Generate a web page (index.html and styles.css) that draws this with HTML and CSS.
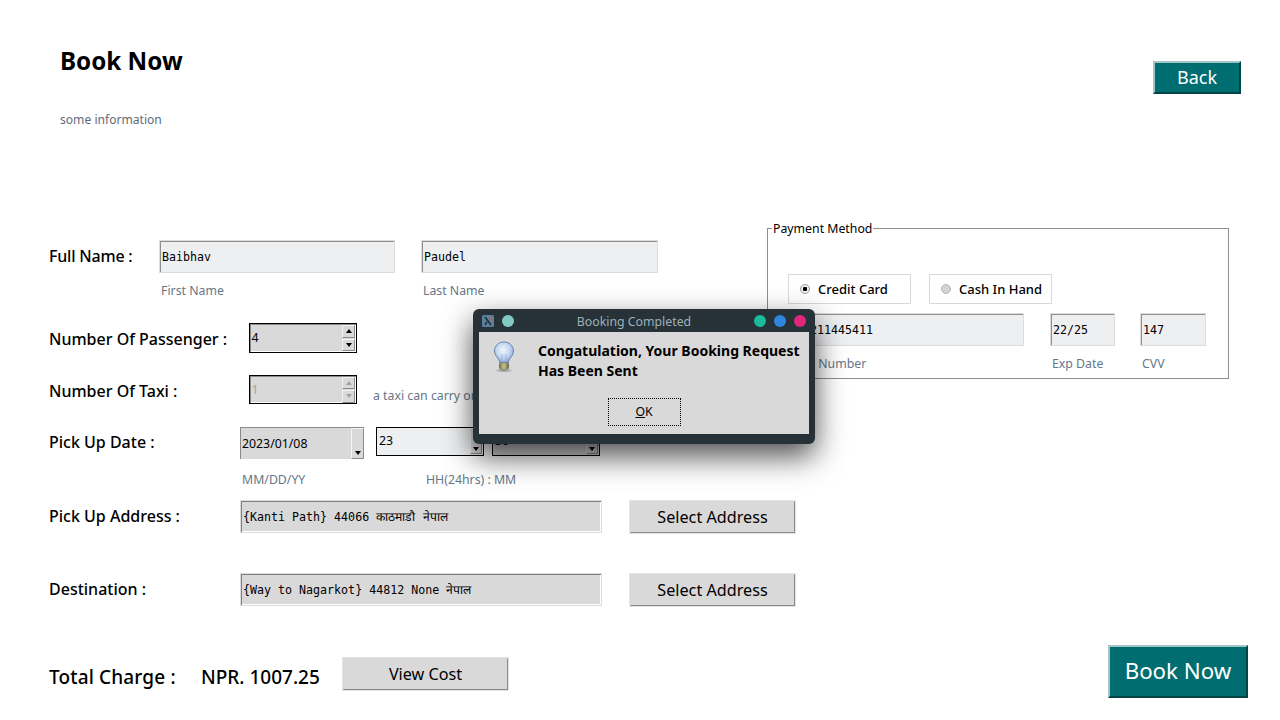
FILE: index.html
```html
<!DOCTYPE html>
<html lang="en">
<head>
<meta charset="utf-8">
<title>Book Now</title>
<link rel="stylesheet" href="styles.css">
</head>
<body>
<div class="page">
  <header class="top">
    <div>
      <h1 class="title">Book Now</h1>
      <p class="info">some information</p>
    </div>
    <button class="btn-teal btn-back">Back</button>
  </header>

  <section class="upper">
    <div class="left">
      <div class="row row-name">
        <label class="lbl lbl-name">Full Name :</label>
        <div class="entry entry-light mono entry-first">Baibhav</div>
        <div class="entry entry-light mono entry-last">Paudel</div>
      </div>
      <div class="subs subs-name">
        <span class="sub sub-first">First Name</span>
        <span class="sub">Last Name</span>
      </div>
      <div class="row row-pass">
        <label class="lbl lbl-pass">Number Of Passenger :</label>
        <div class="spin">
          <span class="spin-val">4</span>
          <span class="spin-btns">
            <span class="spin-btn"><i class="tri tri-up"></i></span>
            <span class="spin-btn"><i class="tri tri-down"></i></span>
          </span>
        </div>
      </div>
      <div class="row row-taxi">
        <label class="lbl lbl-pass">Number Of Taxi :</label>
        <div class="spin spin-off">
          <span class="spin-val">1</span>
          <span class="spin-btns">
            <span class="spin-btn"><i class="tri tri-up"></i></span>
            <span class="spin-btn"><i class="tri tri-down"></i></span>
          </span>
        </div>
        <span class="sub hint">a taxi can carry only 4 passengers</span>
      </div>
      <div class="row row-date">
        <label class="lbl lbl-date">Pick Up Date :</label>
        <div class="date">
          <span class="date-val">2023/01/08</span>
          <span class="date-arrow"><i class="tri tri-down"></i></span>
        </div>
        <div class="combo combo-hour">
          <span class="combo-val">23</span>
          <span class="combo-arrow"><i class="tri tri-down"></i></span>
        </div>
        <div class="combo combo-min">
          <span class="combo-val">30</span>
          <span class="combo-arrow"><i class="tri tri-down"></i></span>
        </div>
      </div>
      <div class="subs subs-date">
        <span class="sub sub-mm">MM/DD/YY</span>
        <span class="sub">HH(24hrs) : MM</span>
      </div>
    </div>

    <fieldset class="pay">
      <legend class="pay-legend">Payment Method</legend>
      <div class="radios">
        <div class="radio"><i class="dot dot-on"></i>Credit Card</div>
        <div class="radio"><i class="dot"></i>Cash In Hand</div>
      </div>
      <div class="card-row">
        <div class="card-col col-num">
          <div class="entry entry-light mono">123211445411</div>
          <span class="sub">Card Number</span>
        </div>
        <div class="card-col col-exp">
          <div class="entry entry-light mono">22/25</div>
          <span class="sub">Exp Date</span>
        </div>
        <div class="card-col col-cvv">
          <div class="entry entry-light mono">147</div>
          <span class="sub">CVV</span>
        </div>
      </div>
    </fieldset>
  </section>

  <section class="lower">
    <div class="row row-addr">
      <label class="lbl lbl-date">Pick Up Address :</label>
      <div class="entry entry-addr mono">{Kanti Path} 44066 <span class="deva">काठमाडौ नेपाल</span></div>
      <button class="btn-grey btn-select">Select Address</button>
    </div>
    <div class="row row-dest">
      <label class="lbl lbl-date">Destination :</label>
      <div class="entry entry-addr mono">{Way to Nagarkot} 44812 None <span class="deva">नेपाल</span></div>
      <button class="btn-grey btn-select">Select Address</button>
    </div>
    <div class="row row-total">
      <span class="total-lbl">Total Charge :</span>
      <span class="total-val">NPR. 1007.25</span>
      <button class="btn-grey btn-cost">View Cost</button>
      <button class="btn-teal btn-book">Book Now</button>
    </div>
  </section>
</div>

<div class="dialog" role="dialog">
  <div class="dlg-bar">
    <svg class="dlg-app" viewBox="0 0 12 12" width="12" height="12" aria-hidden="true">
      <rect width="12" height="12" rx="1.5" fill="#5b7f9e"/>
      <path d="M3 2 L9 10 M3 10 L5 7" stroke="#20303c" stroke-width="1.6" fill="none"/>
      <path d="M8 2 L10 9" stroke="#b9674a" stroke-width="1" fill="none"/>
    </svg>
    <i class="light light-pin"></i>
    <span class="dlg-title">Booking Completed</span>
    <i class="light light-min"></i>
    <i class="light light-max"></i>
    <i class="light light-close"></i>
  </div>
  <div class="dlg-body">
    <div class="dlg-main">
      <svg class="bulb" viewBox="0 0 22 32" width="22" height="32" aria-hidden="true">
        <defs>
          <radialGradient id="glass" cx="45%" cy="38%" r="65%">
            <stop offset="0" stop-color="#f2f6fc"/>
            <stop offset="0.55" stop-color="#c3d6f2"/>
            <stop offset="1" stop-color="#7fa0d4"/>
          </radialGradient>
          <radialGradient id="shade" cx="50%" cy="50%" r="50%">
            <stop offset="0" stop-color="#555" stop-opacity="0.6"/>
            <stop offset="1" stop-color="#555" stop-opacity="0"/>
          </radialGradient>
          <linearGradient id="base" x1="0" x2="1" y1="0" y2="0">
            <stop offset="0" stop-color="#8d8a55"/>
            <stop offset="0.5" stop-color="#f0eeb8"/>
            <stop offset="1" stop-color="#77744a"/>
          </linearGradient>
        </defs>
        <ellipse cx="11" cy="29.5" rx="10" ry="2.2" fill="url(#shade)"/>
        <path d="M11 1 C5.5 1 1.5 5 1.5 10 C1.5 14 4.5 16 6 19 L7 22 L15 22 L16 19 C17.5 16 20.5 14 20.5 10 C20.5 5 16.5 1 11 1 Z" fill="url(#glass)" stroke="#6d86ad" stroke-width="1"/>
        <path d="M8 21 L9.5 13 M14 21 L12.5 13" stroke="#9aa8bd" stroke-width="0.7" fill="none"/>
        <rect x="6.5" y="22" width="9" height="6" rx="1.2" fill="url(#base)" stroke="#55532f" stroke-width="0.6"/>
        <path d="M6.5 24 H15.5 M6.5 26 H15.5" stroke="#5e5b35" stroke-width="0.6"/>
      </svg>
      <p class="dlg-msg">Congatulation, Your Booking Request Has Been Sent</p>
    </div>
    <div class="dlg-actions">
      <button class="btn-ok"><span class="ul">O</span>K</button>
    </div>
  </div>
</div>
</body>
</html>
```
FILE: styles.css
```css
* { box-sizing: border-box; }
html, body { margin: 0; padding: 0; background: #fff; }
body {
  width: 1280px; height: 720px; overflow: hidden; position: relative;
  font-family: "Noto Sans", sans-serif; color: #000;
}
.page { width: 1280px; height: 720px; }
.mono { font-family: "DejaVu Sans Mono", monospace; font-size: 11.65px; }
.deva { font-size: 12.2px; }

.top { display: flex; justify-content: space-between; align-items: flex-start; height: 175px; padding: 45px 39px 0 60px; }
.title { margin: 0; font-size: 24.2px; line-height: 32px; font-weight: 700; }
.info { margin: 35px 0 0; font-size: 12.1px; line-height: 16px; color: #5f6b78; }

button { font-family: inherit; padding: 0; cursor: pointer; }
.btn-teal {
  background: #006d70; color: #fff; display: block;
  border: 2px solid; border-color: #a3c5c6 #004648 #004648 #a3c5c6;
}
.btn-back { width: 88px; height: 33px; margin-top: 16px; font-size: 18px; line-height: 27px; }
.btn-book { width: 140px; height: 53px; padding-bottom: 2px; font-size: 22.3px; line-height: 45px; margin-left: auto; margin-top: -4px; margin-right: 32px; }
.btn-grey {
  background: #d9d9d9; color: #000; font-size: 16.2px; line-height: 28px; display: block;
  border: 1px solid #8a8a8a;
  box-shadow: 0 0 0 1px #e4e4e4;
  border-top-color: #d9d9d9; border-left-color: #d9d9d9;
}

.upper { display: flex; height: 280px; padding-left: 49px; margin-top: 45px; }
.left { width: 718px; padding-top: 21px; flex: none; }
.row { display: flex; align-items: center; }
.lbl { font-size: 16px; line-height: 22px; font-weight: 500; flex: none; }
.lbl-name { width: 111px; margin-bottom: 2px; letter-spacing: -.2px; }
.lbl-pass { width: 200px; margin-top: 2px; }
.lbl-date { width: 191px; }
.row-addr .lbl, .row-dest .lbl { margin-bottom: 2px; }

.entry { height: 33px; line-height: 32px; padding-left: 2px; white-space: nowrap; overflow: hidden; border: 1px solid #dcdcdc; flex: none; }
.entry-light { background: #eeeff1; box-shadow: inset 1px 1px 0 #8f8f8f; }
.entry-first { width: 236px; margin-left: -1px; align-self: flex-end; }
.entry-last { width: 237px; margin-left: 26px; align-self: flex-end; }
.entry-addr { width: 362px; background: #d9d9d9; box-shadow: inset 1px 1px 0 #808080, inset -1px -1px 0 #fff; }

.row-name { height: 32px; }
.subs { display: flex; height: 16px; }
.subs-name { margin-top: 10px; padding-left: 112px; }
.sub { font-size: 12.3px; line-height: 16px; color: #667788; white-space: nowrap; }
.sub-first { width: 262px; }

.row-pass { margin-top: 24px; height: 30px; }
.row-taxi { margin-top: 22px; height: 29px; }
.spin {
  width: 108px; height: 100%; background: #d9d9d9; border: 1px solid #000;
  outline: 1px solid #000; outline-offset: -1px;
  box-shadow: inset 1px 1px 0 #8a8a8a, inset -1px -1px 0 #fff; display: flex; justify-content: space-between; align-items: center;
  flex: none;
}
.spin-val { padding-left: 1.5px; font-size: 12.3px; line-height: 24px; }
.spin-btns { display: flex; flex-direction: column; width: 13px; height: 26px; margin-right: 1px; gap: 1px; }
.spin-btn { flex: 1; background: #d9d9d9; border: 1px solid #8a8a8a; border-top-color: #f2f2f2; border-left-color: #f2f2f2; display: flex; align-items: center; justify-content: center; }
.tri { display: block; width: 0; height: 0; border-left: 3.5px solid transparent; border-right: 3.5px solid transparent; }
.tri-up { border-bottom: 4px solid #000; }
.tri-down { border-top: 4px solid #000; }
.spin-off .spin-val { color: #a3a3a3; }
.spin-off .tri-up { border-bottom-color: #a3a3a3; }
.spin-off .tri-down { border-top-color: #a3a3a3; }
.hint { margin-left: 16px; margin-top: 13px; }

.row-date { margin-top: 23px; align-items: flex-start; height: 32px; }
.row-date .lbl { margin-top: 4px; }
.date { width: 124px; height: 32px; background: #d9d9d9; box-shadow: inset 1px 1px 0 #8a8a8a; display: flex; justify-content: space-between; flex: none; }
.date-val { font-size: 12.3px; line-height: 33px; padding-left: 2px; }
.date-arrow { width: 13px; height: 31px; margin-top: 1px; background: #d9d9d9; border: 1px solid #8a8a8a; border-top-color: #f4f4f4; border-left-color: #f4f4f4; display: flex; align-items: flex-end; justify-content: center; padding-bottom: 3px; }
.combo { width: 108px; height: 29px; background: #eeeff1; border: 1px solid #000; display: flex; justify-content: space-between; flex: none; }
.combo-hour { margin-left: 12px; }
.combo-min { margin-left: 8px; background: #d9d9d9; }
.combo-val { font-size: 12.3px; line-height: 26px; padding-left: 2px; }
.combo-arrow { width: 12px; height: 26px; background: #d9d9d9; border: 1px solid #8a8a8a; border-top-color: #f4f4f4; border-left-color: #f4f4f4; display: flex; align-items: flex-end; justify-content: center; padding-bottom: 2px; margin-right: 1px; }
.subs-date { margin-top: 13px; padding-left: 193px; }
.sub-mm { width: 184px; }

.pay { width: 462px; height: 159px; margin: 0; padding: 0 0 0 20px; border: 1px solid #8e8e8e; min-width: 0; }
.pay-legend { font-size: 12.3px; line-height: 16px; padding: 1px 1px 0; margin-left: -16px; }
.radios { display: flex; gap: 18px; margin-top: 37px; }
.radio { width: 123px; height: 30px; border: 1px solid #d9d9d9; display: flex; align-items: center; padding-left: 11px; font-size: 13px; font-weight: 500; }
.dot { width: 10px; height: 10px; border-radius: 50%; background: #d4d4d4; border: 1px solid #b5b5b5; margin-right: 8px; flex: none; }
.dot-on { background: radial-gradient(circle, #000 0 2px, #f2f2f2 2.5px); border-color: #9a9a9a; }
.card-row { display: flex; margin-top: 9px; margin-left: -2px; }
.card-col { display: flex; flex-direction: column; gap: 9px; flex: none; }
.card-col .entry { margin-bottom: 1px; }
.card-col .sub { padding-left: 2px; }
.col-num { width: 238px; margin-right: 26px; }
.col-exp { width: 65px; margin-right: 25px; }
.col-cvv { width: 66px; }

.lower { padding-left: 49px; }
.row-addr { height: 33px; }
.row-dest { height: 33px; margin-top: 40px; }
.btn-select { width: 165px; height: 32px; margin-left: 28px; }
.row-total { height: 33px; margin-top: 51px; }
.total-lbl { font-size: 19px; line-height: 24px; font-weight: 500; letter-spacing: .15px; width: 152px; margin-top: 6px; flex: none; }
.total-val { font-size: 19px; line-height: 24px; font-weight: 500; width: 141px; margin-top: 6px; flex: none; }
.btn-cost { width: 165px; height: 32px; margin-left: 1px; }

.dialog {
  position: absolute; left: 473px; top: 309px; width: 342px; height: 135px;
  background: #263238; border-radius: 6px; padding: 0 6px 10px;
  box-shadow: 0 12px 30px rgba(0,0,0,.7);
}
.dlg-bar { height: 23px; display: flex; align-items: center; position: relative; margin: 0 -6px; padding: 0 9px; }
.dlg-app { flex: none; }
.light { width: 12px; height: 12px; border-radius: 50%; flex: none; display: block; }
.light-pin { background: #80cbc4; margin-left: 8px; }
.light-min { background: #1abc9c; margin-left: auto; }
.light-max { background: #2e86de; margin-left: 8px; }
.light-close { background: #e0287a; margin-left: 8px; }
.dlg-title { position: absolute; left: 0; right: 20px; top: 5px; text-align: center; font-size: 12.3px; line-height: 16px; color: #9fb0b9; }
.dlg-body { height: 102px; background: #d9d9d9; display: flex; flex-direction: column; }
.dlg-main { display: flex; height: 66px; padding: 9px 0 0 14px; }
.bulb { flex: none; }
.dlg-msg { margin: 0 0 0 23px; font-size: 14px; line-height: 20px; font-weight: 700; width: 268px; }
.dlg-actions { display: flex; justify-content: center; }
.btn-ok {
  width: 73px; height: 28px; background: #d9d9d9; font-size: 12.3px; line-height: 24px; color: #000;
  border: 1px dotted #000; outline: 1px solid #d9d9d9;
}
.ul { text-decoration: underline; }
```
